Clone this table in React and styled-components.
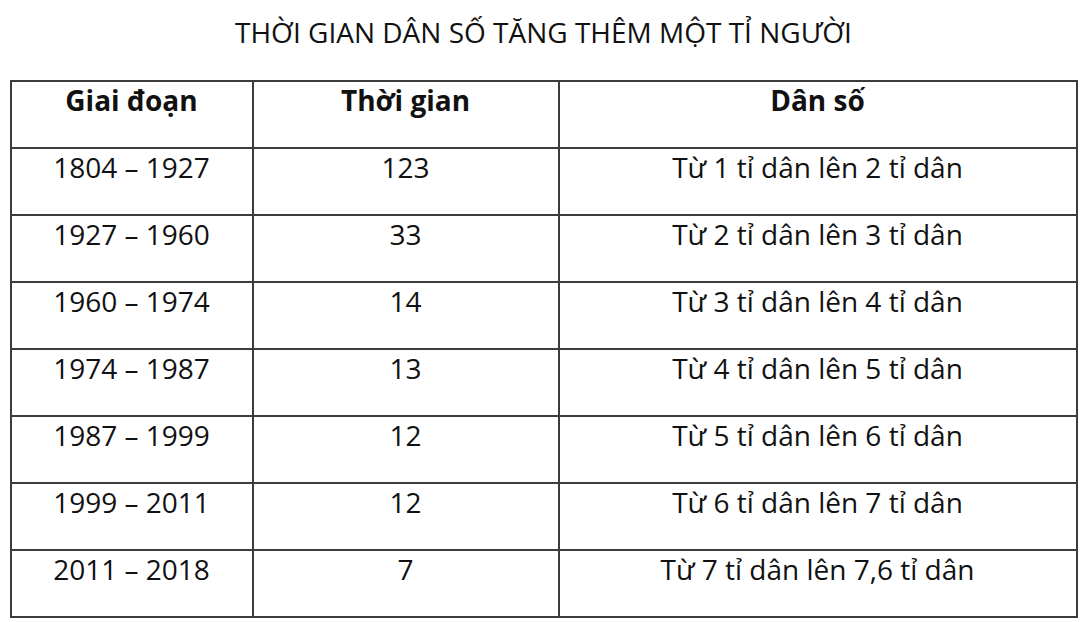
import React from 'react';
import styled, { createGlobalStyle } from 'styled-components';

const GlobalStyle = createGlobalStyle`
  body {
    margin: 0;
    background: #fff;
    font-family: "Open Sans", "Noto Sans", sans-serif;
    color: #111;
  }
`;

const Page = styled.div`
  padding-top: 13px;
  display: flex;
  flex-direction: column;
  align-items: center;
`;

const Title = styled.h1`
  margin: 0 0 29px;
  font-size: 28px;
  font-weight: 400;
  line-height: 38px;
`;

const Table = styled.table`
  width: 1066px;
  border-collapse: collapse;
  border: 2px solid #3c3c3c;
  table-layout: fixed;
`;

const Cell = styled.td`
  height: 67px;
  padding: 0;
  box-sizing: border-box;
  border: 2px solid #3c3c3c;
  vertical-align: top;
  text-align: center;
  font-size: 28px;
  line-height: 37px;
  font-weight: ${(p) => (p.$head ? 700 : 400)};
`;

const rows = [
  ['1804 – 1927', '123', 'Từ 1 tỉ dân lên 2 tỉ dân'],
  ['1927 – 1960', '33', 'Từ 2 tỉ dân lên 3 tỉ dân'],
  ['1960 – 1974', '14', 'Từ 3 tỉ dân lên 4 tỉ dân'],
  ['1974 – 1987', '13', 'Từ 4 tỉ dân lên 5 tỉ dân'],
  ['1987 – 1999', '12', 'Từ 5 tỉ dân lên 6 tỉ dân'],
  ['1999 – 2011', '12', 'Từ 6 tỉ dân lên 7 tỉ dân'],
  ['2011 – 2018', '7', 'Từ 7 tỉ dân lên 7,6 tỉ dân'],
];

export default function App() {
  return (
    <Page>
      <GlobalStyle />
      <Title>THỜI GIAN DÂN SỐ TĂNG THÊM MỘT TỈ NGƯỜI</Title>
      <Table>
        <colgroup>
          <col style={{ width: 242 }} />
          <col style={{ width: 306 }} />
          <col style={{ width: 518 }} />
        </colgroup>
        <tbody>
          <tr>
            <Cell $head>Giai đoạn</Cell>
            <Cell $head>Thời gian</Cell>
            <Cell $head>Dân số</Cell>
          </tr>
          {rows.map((r) => (
            <tr key={r[0]}>
              {r.map((c, i) => (
                <Cell key={i}>{c}</Cell>
              ))}
            </tr>
          ))}
        </tbody>
      </Table>
    </Page>
  );
}
